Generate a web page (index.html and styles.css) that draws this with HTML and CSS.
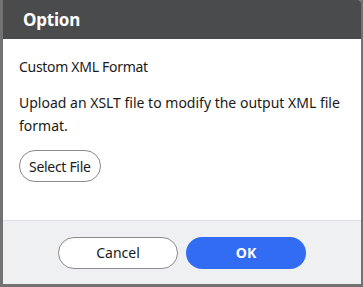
FILE: index.html
```html
<!DOCTYPE html>
<html>
<head>
<meta charset="utf-8">
<link rel="stylesheet" href="styles.css">
</head>
<body>
<div class="dialog">
  <div class="header"><span class="title">Option</span></div>
  <div class="content">
    <div class="label">Custom XML Format</div>
    <p class="desc">Upload an XSLT file to modify the output XML file format.</p>
    <button class="select">Select File</button>
  </div>
  <div class="footer">
    <button class="btn cancel">Cancel</button>
    <button class="btn ok">OK</button>
  </div>
</div>
</body>
</html>
```
FILE: styles.css
```css
html, body {
  margin: 0;
  padding: 0;
  width: 363px;
  height: 287px;
  overflow: hidden;
  background: #727272;
  font-family: "Noto Sans", "Open Sans", sans-serif;
}
.dialog {
  margin: 0 2px 3px 3px;
  height: 284px;
  display: flex;
  flex-direction: column;
  background: #fff;
  border-top-right-radius: 3px;
  overflow: hidden;
}
.header {
  height: 39px;
  background: #4a4b4d;
  display: flex;
  align-items: center;
  padding-left: 20px;
}
.title {
  color: #fff;
  font-size: 17px;
  font-weight: 700;
  letter-spacing: -0.2px;
}
.content {
  flex: 1;
  padding: 18px 16px 0 16px;
  color: #1a1a1a;
  font-size: 14px;
}
.label {
  line-height: 20px;
  letter-spacing: -0.3px;
}
.desc {
  margin: 14px 0 0 0;
  line-height: 23px;
}
.select {
  margin-top: 13px;
  height: 32px;
  padding: 0 9px;
  border: 1px solid #8a8a8a;
  border-radius: 16px;
  background: #fff;
  font-family: inherit;
  font-size: 14px;
  letter-spacing: -0.3px;
  color: #1a1a1a;
}
.footer {
  height: 63px;
  border-top: 1px solid #dcdfe3;
  background: #eff0f2;
  display: flex;
  justify-content: center;
  align-items: center;
  gap: 8px;
}
.btn {
  width: 120px;
  height: 32px;
  border-radius: 16px;
  font-family: inherit;
  font-size: 14px;
}
.cancel {
  background: #fff;
  border: 1px solid #8a8a8a;
  color: #1a1a1a;
}
.ok {
  background: #326cf3;
  border: none;
  color: #fff;
  font-weight: 700;
}
```
